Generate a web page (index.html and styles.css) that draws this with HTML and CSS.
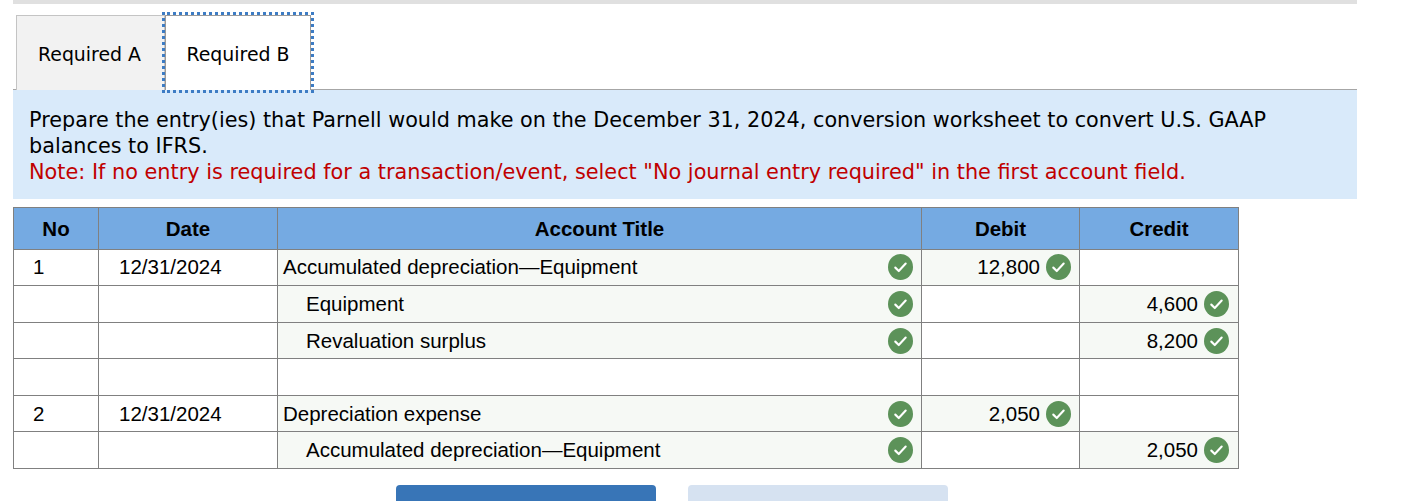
FILE: index.html
```html
<!DOCTYPE html>
<html lang="en">

<head>
    <meta charset="UTF-8" />
    <title>Required B</title>
    <link rel="stylesheet" href="styles.css">
</head>

<body>
    <svg class="icon-defs" width="0" height="0">
        <symbol id="check" viewBox="0 0 26 26" preserveAspectRatio="none">
            <circle cx="13" cy="13" r="13" fill="#5c9259" />
            <path d="M7.6 13.6l3.6 3.4 7.2-7.4" fill="none" stroke="#fff" stroke-width="2.2" stroke-linecap="round" stroke-linejoin="round" />
        </symbol>
    </svg>

    <div class="page">
        <div class="top-bar"></div>

        <div class="tabs">
            <div class="tab">Required A</div>
            <div class="tab tab-active">Required B</div>
        </div>

        <div class="instructions">
            <p>Prepare the entry(ies) that Parnell would make on the December 31, 2024, conversion worksheet to convert U.S. GAAP balances to IFRS.</p>
            <p class="note">Note: If no entry is required for a transaction/event, select "No journal entry required" in the first account field.</p>
        </div>

        <table class="journal">
            <colgroup>
                <col class="col-no">
                <col class="col-date">
                <col class="col-account">
                <col class="col-amount">
                <col class="col-amount-last">
            </colgroup>
            <thead>
                <tr>
                    <th>No</th>
                    <th>Date</th>
                    <th>Account Title</th>
                    <th>Debit</th>
                    <th>Credit</th>
                </tr>
            </thead>
            <tbody>
                <tr class="row-a">
                    <td class="no">1</td>
                    <td class="date">12/31/2024</td>
                    <td class="shade"><div class="account"><span>Accumulated depreciation—Equipment</span><svg class="check"><use href="#check" /></svg></div></td>
                    <td class="shade"><div class="amount">12,800<svg class="check"><use href="#check" /></svg></div></td>
                    <td></td>
                </tr>
                <tr class="row-b">
                    <td></td>
                    <td></td>
                    <td class="shade"><div class="account indent"><span>Equipment</span><svg class="check"><use href="#check" /></svg></div></td>
                    <td></td>
                    <td class="shade"><div class="amount credit">4,600<svg class="check"><use href="#check" /></svg></div></td>
                </tr>
                <tr class="row-b row-c">
                    <td></td>
                    <td></td>
                    <td class="shade"><div class="account indent"><span>Revaluation surplus</span><svg class="check"><use href="#check" /></svg></div></td>
                    <td></td>
                    <td class="shade"><div class="amount credit">8,200<svg class="check"><use href="#check" /></svg></div></td>
                </tr>
                <tr class="row-b">
                    <td></td>
                    <td></td>
                    <td></td>
                    <td></td>
                    <td></td>
                </tr>
                <tr class="row-b">
                    <td class="no">2</td>
                    <td class="date">12/31/2024</td>
                    <td class="shade"><div class="account"><span>Depreciation expense</span><svg class="check"><use href="#check" /></svg></div></td>
                    <td class="shade"><div class="amount">2,050<svg class="check"><use href="#check" /></svg></div></td>
                    <td></td>
                </tr>
                <tr class="row-b">
                    <td></td>
                    <td></td>
                    <td class="shade"><div class="account indent"><span>Accumulated depreciation—Equipment</span><svg class="check"><use href="#check" /></svg></div></td>
                    <td></td>
                    <td class="shade"><div class="amount credit">2,050<svg class="check"><use href="#check" /></svg></div></td>
                </tr>
            </tbody>
        </table>

        <div class="buttons">
            <div class="btn btn-primary"></div>
            <div class="btn btn-light"></div>
        </div>
    </div>
</body>

</html>
```

FILE: styles.css
```css
* {
    box-sizing: border-box;
    margin: 0;
    padding: 0;
}

html,
body {
    height: 501px;
    overflow: hidden;
    background: #fff;
}

.icon-defs {
    display: block;
    height: 0;
}

.page {
    width: 1344px;
    margin-left: 13px;
    color: #000;
}

.top-bar {
    height: 4px;
    background: #e0e0e0;
}

.tabs {
    display: flex;
    height: 86px;
    padding: 11px 0 0 3px;
    border-bottom: 1px solid #a6a6a6;
    font-family: "DejaVu Sans", sans-serif;
    font-size: 18.9px;
}

.tab {
    width: 149px;
    height: 75px;
    display: flex;
    align-items: center;
    justify-content: center;
    padding: 2px 2px 0 0;
    background: #f2f2f2;
    border: 1px solid #c4c4c4;
    border-bottom: none;
}

.tab-active {
    width: 146px;
    padding: 2px 0 0;
    background: #fff;
    border: 1px solid #9a9a9a;
    border-bottom: none;
    outline: 3px dotted #3d7cc4;
    outline-offset: 0;
}

.instructions {
    height: 109px;
    padding: 17px 16px 0;
    background: #d9eafa;
    font-family: "DejaVu Sans", sans-serif;
    font-size: 20.75px;
    line-height: 26px;
}

.note {
    color: #c00000;
    font-size: 20.82px;
}

.journal {
    width: 1225px;
    margin-top: 8px;
    border-collapse: collapse;
    table-layout: fixed;
    font-family: "Liberation Sans", sans-serif;
    font-size: 20.5px;
}

.col-no {
    width: 85px;
}

.col-date {
    width: 179px;
}

.col-account {
    width: 644px;
}

.col-amount {
    width: 158px;
}

.col-amount-last {
    width: 159px;
}

.journal th,
.journal td {
    border: 1px solid #808080;
}

.journal th {
    height: 42px;
    background: #75aae2;
    font-weight: bold;
}

.row-a td {
    height: 36px;
    padding-bottom: 1px;
}

.row-b td {
    height: 36.6px;
}

.row-b.row-c td {
    padding-top: 1px;
}

.journal .shade {
    background: #f6f9f5;
}

.journal .no {
    padding-left: 19px;
}

.journal .date {
    padding-left: 20px;
}

.account {
    display: flex;
    align-items: center;
    justify-content: space-between;
    padding: 0 8px 0 5px;
}

.indent {
    padding-left: 28px;
}

.amount {
    display: flex;
    align-items: center;
    justify-content: flex-end;
    gap: 6px;
    padding-right: 8px;
}

.amount.credit {
    padding-right: 9px;
}

.check {
    display: block;
    flex: none;
    width: 25px;
    height: 26px;
}

.buttons {
    display: flex;
    gap: 32px;
    margin-top: 16px;
    padding-left: 383px;
}

.btn {
    width: 260px;
    height: 40px;
    border-radius: 4px;
}

.btn-primary {
    background: #3875b7;
}

.btn-light {
    background: #d6e2f1;
}
```
